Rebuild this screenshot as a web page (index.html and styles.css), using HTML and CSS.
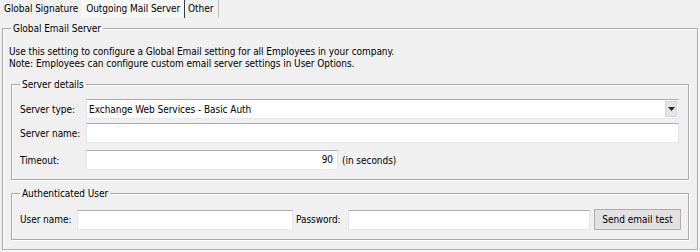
FILE: index.html
```html
<!DOCTYPE html>
<html>
<head>
<meta charset="utf-8">
<link rel="stylesheet" href="styles.css">
</head>
<body>
<div class="tabs">
  <div class="tab">Global Signature</div>
  <div class="tab tab-active">Outgoing Mail Server</div>
  <div class="tab tab-last">Other</div>
</div>
<fieldset class="group group-outer">
  <legend class="legend">Global Email Server</legend>
  <p class="intro">Use this setting to configure a Global Email setting for all Employees in your company.<br>Note: Employees can configure custom email server settings in User Options.</p>
  <fieldset class="group group-details">
    <legend class="legend">Server details</legend>
    <div class="rows">
      <div class="row">
        <span class="label">Server type:</span>
        <div class="input select">
          <span class="select-text">Exchange Web Services - Basic Auth</span>
          <span class="drop"><svg width="7" height="4" viewBox="0 0 7 4"><path d="M0 0H7L3.5 4Z" fill="#222"/></svg></span>
        </div>
      </div>
      <div class="row">
        <span class="label">Server name:</span>
        <div class="input"></div>
      </div>
      <div class="row row-timeout">
        <span class="label">Timeout:</span>
        <div class="input input-timeout">90</div>
        <span class="unit">(in seconds)</span>
      </div>
    </div>
  </fieldset>
  <fieldset class="group group-auth">
    <legend class="legend">Authenticated User</legend>
    <div class="auth-row">
      <span class="label-user">User name:</span>
      <div class="input input-user"></div>
      <span class="label-pass">Password:</span>
      <div class="input input-pass"></div>
      <button class="btn">Send email test</button>
    </div>
  </fieldset>
</fieldset>
</body>
</html>
```
FILE: styles.css
```css
html, body {
  margin: 0;
  padding: 0;
}
body {
  width: 700px;
  height: 252px;
  background: #f0f0f0;
  font-family: "DejaVu Sans Condensed", "DejaVu Sans", sans-serif;
  font-size: 10px;
  letter-spacing: -0.05px;
  line-height: 13px;
  color: #000;
  overflow: hidden;
  white-space: nowrap;
}
.tabs {
  display: flex;
  height: 18px;
  margin-bottom: 4px;
  padding-left: 1px;
}
.tab {
  padding: 2px 3px 0 3px;
  height: 16px;
}
.tab-active {
  background: #f7f7f7;
  border-right: 1px solid #3c3c3c;
  padding-left: 5px;
  padding-right: 4px;
}
.tab-last {
  border-right: 1px solid #c4c4c4;
  padding-right: 5px;
}
.group {
  margin: 0;
  border: 1px solid #a9a9a9;
  box-shadow: inset 1px 1px 0 #fff, 1px 1px 0 #fff;
  min-width: 0;
}
.legend {
  padding: 0 2px;
  line-height: 13px;
}
.group-outer {
  margin: 0 2px;
  padding: 0 8px 9px 8px;
}
.intro {
  margin: 11px 0 8px -2px;
  line-height: 12px;
}
.group-details {
  padding: 0 9px 9px 8px;
}
.rows {
  display: flex;
  flex-direction: column;
  gap: 4px;
  margin-top: 8px;
}
.row {
  display: flex;
  align-items: center;
}
.row-timeout {
  margin-top: 3px;
}
.label {
  width: 66px;
  flex: none;
}
.input {
  flex: 1;
  height: 20px;
  box-sizing: border-box;
  background: #fff;
  border: 1px solid #e2e3ea;
  border-top-color: #abadb3;
  border-bottom-color: #e3e9ef;
}
.select {
  display: flex;
  align-items: center;
  padding: 1px 1px 1px 2px;
}
.select-text {
  flex: 1;
}
.drop {
  width: 12px;
  height: 16px;
  box-sizing: border-box;
  background: #e5e5e5;
  border: 1px solid #d2d2d2;
  display: flex;
  align-items: center;
  justify-content: center;
}
.input-timeout {
  flex: none;
  width: 252px;
  text-align: right;
  padding: 2px 4px 0 0;
}
.unit {
  margin-left: 4px;
}
.group-auth {
  margin-top: 7px;
  padding: 0 7px 9px 8px;
}
.auth-row {
  display: flex;
  align-items: center;
  margin-top: 9px;
}
.label-user {
  width: 57px;
  flex: none;
}
.input-user {
  flex: none;
  width: 216px;
}
.label-pass {
  margin-left: 3px;
  width: 52px;
  flex: none;
}
.input-pass {
  flex: 1;
}
.btn {
  margin-left: 4px;
  width: 87px;
  height: 21px;
  background: #e1e1e1;
  border: 1px solid #adadad;
  font: inherit;
  color: #000;
  padding: 0;
}
```
